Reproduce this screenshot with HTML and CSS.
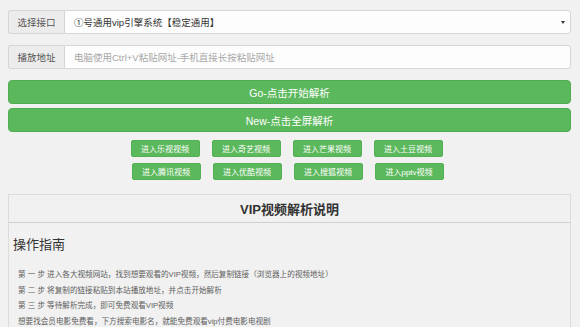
FILE: index.html
```html
<!DOCTYPE html>
<html lang="zh-CN">
<head>
<meta charset="utf-8">
<title>VIP视频解析</title>
<link rel="stylesheet" href="styles.css">
</head>
<body>
<div class="page">
  <div class="input-group">
    <span class="addon">选择接口</span>
    <div class="control select">
      <span class="value">①号通用vip引擎系统【稳定通用】</span>
      <span class="caret"></span>
    </div>
  </div>
  <div class="input-group second">
    <span class="addon">播放地址</span>
    <div class="control">
      <span class="placeholder">电脑使用Ctrl+V粘贴网址-手机直接长按粘贴网址</span>
    </div>
  </div>
  <button class="btn-block go">Go-点击开始解析</button>
  <button class="btn-block new">New-点击全屏解析</button>
  <div class="links">
    <div class="link-row">
      <a class="btn-sm">进入乐视视频</a>
      <a class="btn-sm">进入奇艺视频</a>
      <a class="btn-sm">进入芒果视频</a>
      <a class="btn-sm">进入土豆视频</a>
    </div>
    <div class="link-row shifted">
      <a class="btn-sm">进入腾讯视频</a>
      <a class="btn-sm">进入优酷视频</a>
      <a class="btn-sm">进入搜狐视频</a>
      <a class="btn-sm">进入pptv视频</a>
    </div>
  </div>
  <div class="panel">
    <div class="panel-heading">VIP视频解析说明</div>
    <div class="panel-body">
      <h3 class="guide">操作指南</h3>
      <p class="step">第 一 步 进入各大视频网站，找到想要观看的VIP视频，然后复制链接（浏览器上的视频地址）</p>
      <p class="step">第 二 步 将复制的链接粘贴到本站播放地址，并点击开始解析</p>
      <p class="step">第 三 步 等待解析完成，即可免费观看VIP视频</p>
      <p class="step">想要找会员电影免费看，下方搜索电影名，就能免费观看vip付费电影电视剧</p>
    </div>
  </div>
</div>
</body>
</html>
```
FILE: styles.css
```css
* { box-sizing: border-box; }
html, body {
  margin: 0;
  padding: 0;
  background: #f1f1f1;
  font-family: "Liberation Sans", "Noto Sans CJK SC", sans-serif;
  color: #333;
}
.page {
  padding: 10px 9px 0 8px;
}
.input-group {
  display: flex;
  height: 24px;
}
.input-group.second { margin-top: 11px; }
.addon {
  width: 56px;
  flex: none;
  display: flex;
  align-items: center;
  justify-content: center;
  background: #ececec;
  border: 1px solid #d6d6d6;
  border-right: none;
  border-radius: 3px 0 0 3px;
  font-size: 9.5px;
  color: #555;
}
.control {
  flex: 1;
  display: flex;
  align-items: center;
  padding: 0 9px;
  background: #fdfdfd;
  border: 1px solid #d6d6d6;
  border-radius: 0 3px 3px 0;
  font-size: 9.5px;
}
.value { flex: 1; color: #333; }
.placeholder { color: #a8a8a8; }
.caret {
  width: 0;
  height: 0;
  border-left: 2.5px solid transparent;
  border-right: 2.5px solid transparent;
  border-top: 3px solid #333;
  margin-right: -4px;
}
.btn-block {
  display: block;
  width: 100%;
  height: 24px;
  margin: 0;
  padding: 0;
  background: #5cb85c;
  border: 1px solid #51ad51;
  border-radius: 4px;
  color: #fff;
  font-family: inherit;
  font-size: 10.5px;
}
.go { margin-top: 11px; }
.new { margin-top: 4px; }
.links {
  margin-top: 8px;
  display: flex;
  flex-direction: column;
  gap: 6px;
  padding-right: 6px;
}
.link-row {
  display: flex;
  justify-content: center;
  gap: 12px;
}
.link-row.shifted { padding-left: 2px; }
.btn-sm {
  width: 69px;
  height: 17px;
  display: flex;
  align-items: center;
  justify-content: center;
  background: #5cb85c;
  border: 1px solid #53b053;
  border-radius: 2px;
  color: #fff;
  font-size: 8px;
}
.panel {
  margin-top: 14px;
  border: 1px solid #dcdcdc;
  border-bottom: none;
  height: 140px;
}
.panel-heading {
  height: 28px;
  display: flex;
  align-items: center;
  justify-content: center;
  border-bottom: 1px solid #d0d0d0;
  font-size: 13px;
  font-weight: bold;
  color: #333;
}
.panel-body {
  padding: 13px 4px 0 4px;
}
.guide {
  margin: 0 0 13px 0;
  font-size: 13px;
  font-weight: normal;
  line-height: 18px;
  color: #333;
}
.step {
  margin: 0;
  padding-left: 5px;
  font-size: 7.6px;
  line-height: 15.5px;
  color: #5e5e5e;
}
```
